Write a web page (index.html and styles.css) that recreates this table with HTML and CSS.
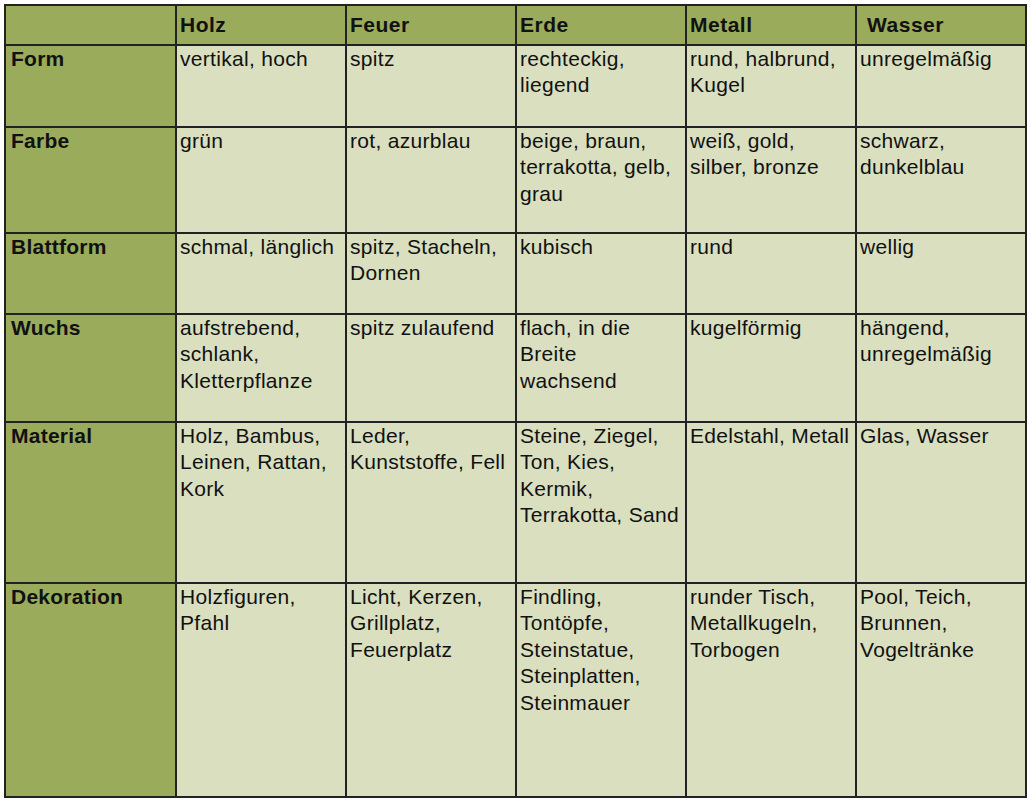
FILE: index.html
```html
<!DOCTYPE html>
<html lang="de">
<head>
<meta charset="utf-8">
<title>Fünf Elemente</title>
<link rel="stylesheet" href="styles.css">
</head>
<body>
<table class="grid">
  <colgroup>
    <col class="c-label">
    <col class="c-data"><col class="c-data"><col class="c-data"><col class="c-data"><col class="c-data">
  </colgroup>
  <thead>
    <tr class="r-head">
      <th class="corner"></th>
      <th>Holz</th>
      <th>Feuer</th>
      <th>Erde</th>
      <th>Metall</th>
      <th class="indent">Wasser</th>
    </tr>
  </thead>
  <tbody>
    <tr class="r-form">
      <th>Form</th>
      <td>vertikal, hoch</td>
      <td>spitz</td>
      <td>rechteckig,<br>liegend</td>
      <td>rund, halbrund,<br>Kugel</td>
      <td>unregelmäßig</td>
    </tr>
    <tr class="r-farbe">
      <th>Farbe</th>
      <td>grün</td>
      <td>rot, azurblau</td>
      <td>beige, braun,<br>terrakotta, gelb,<br>grau</td>
      <td>weiß, gold,<br>silber, bronze</td>
      <td>schwarz,<br>dunkelblau</td>
    </tr>
    <tr class="r-blatt">
      <th>Blattform</th>
      <td>schmal, länglich</td>
      <td>spitz, Stacheln,<br>Dornen</td>
      <td>kubisch</td>
      <td>rund</td>
      <td>wellig</td>
    </tr>
    <tr class="r-wuchs">
      <th>Wuchs</th>
      <td>aufstrebend,<br>schlank,<br>Kletterpflanze</td>
      <td>spitz zulaufend</td>
      <td>flach, in die<br>Breite<br>wachsend</td>
      <td>kugelförmig</td>
      <td>hängend,<br>unregelmäßig</td>
    </tr>
    <tr class="r-material">
      <th>Material</th>
      <td>Holz, Bambus,<br>Leinen, Rattan,<br>Kork</td>
      <td>Leder,<br>Kunststoffe, Fell</td>
      <td>Steine, Ziegel,<br>Ton, Kies,<br>Kermik,<br>Terrakotta, Sand</td>
      <td>Edelstahl, Metall</td>
      <td>Glas, Wasser</td>
    </tr>
    <tr class="r-deko">
      <th>Dekoration</th>
      <td>Holzfiguren,<br>Pfahl</td>
      <td>Licht, Kerzen,<br>Grillplatz,<br>Feuerplatz</td>
      <td>Findling,<br>Tontöpfe,<br>Steinstatue,<br>Steinplatten,<br>Steinmauer</td>
      <td>runder Tisch,<br>Metallkugeln,<br>Torbogen</td>
      <td>Pool, Teich,<br>Brunnen,<br>Vogeltränke</td>
    </tr>
  </tbody>
</table>
</body>
</html>
```

FILE: styles.css
```css
html, body {
  margin: 0;
  padding: 0;
  background: #ffffff;
}

body {
  padding: 4px 0 0 4px;
  font-family: "Liberation Sans", Arial, sans-serif;
  color: #111111;
}

.grid {
  border-collapse: collapse;
  table-layout: fixed;
  width: 1021px;
  border: 2px solid #2b2b2b;
  font-size: 21px;
  line-height: 26.4px;
  letter-spacing: 0.3px;
}

.c-label { width: 171px; }
.c-data { width: 170px; }

.grid th,
.grid td {
  border: 2px solid #222222;
  padding: 0 3px 0 3px;
  vertical-align: top;
  text-align: left;
  white-space: nowrap;
  overflow: hidden;
}

.grid td {
  background: #d9dfbf;
  font-weight: normal;
}

.grid th {
  background: #9bab5c;
  font-weight: bold;
  font-size: 21px;
}

.grid tbody th {
  padding-left: 5px;
  letter-spacing: 0.25px;
}

.grid thead th {
  vertical-align: middle;
  padding-top: 1px;
  padding-bottom: 0;
  letter-spacing: 0.5px;
}

.grid thead th.indent {
  padding-left: 10px;
}

.r-head { height: 40px; }
.r-form { height: 82px; }
.r-farbe { height: 106px; }
.r-blatt { height: 81px; }
.r-wuchs { height: 108px; }
.r-material { height: 161px; }
.r-deko { height: 214px; }
```
